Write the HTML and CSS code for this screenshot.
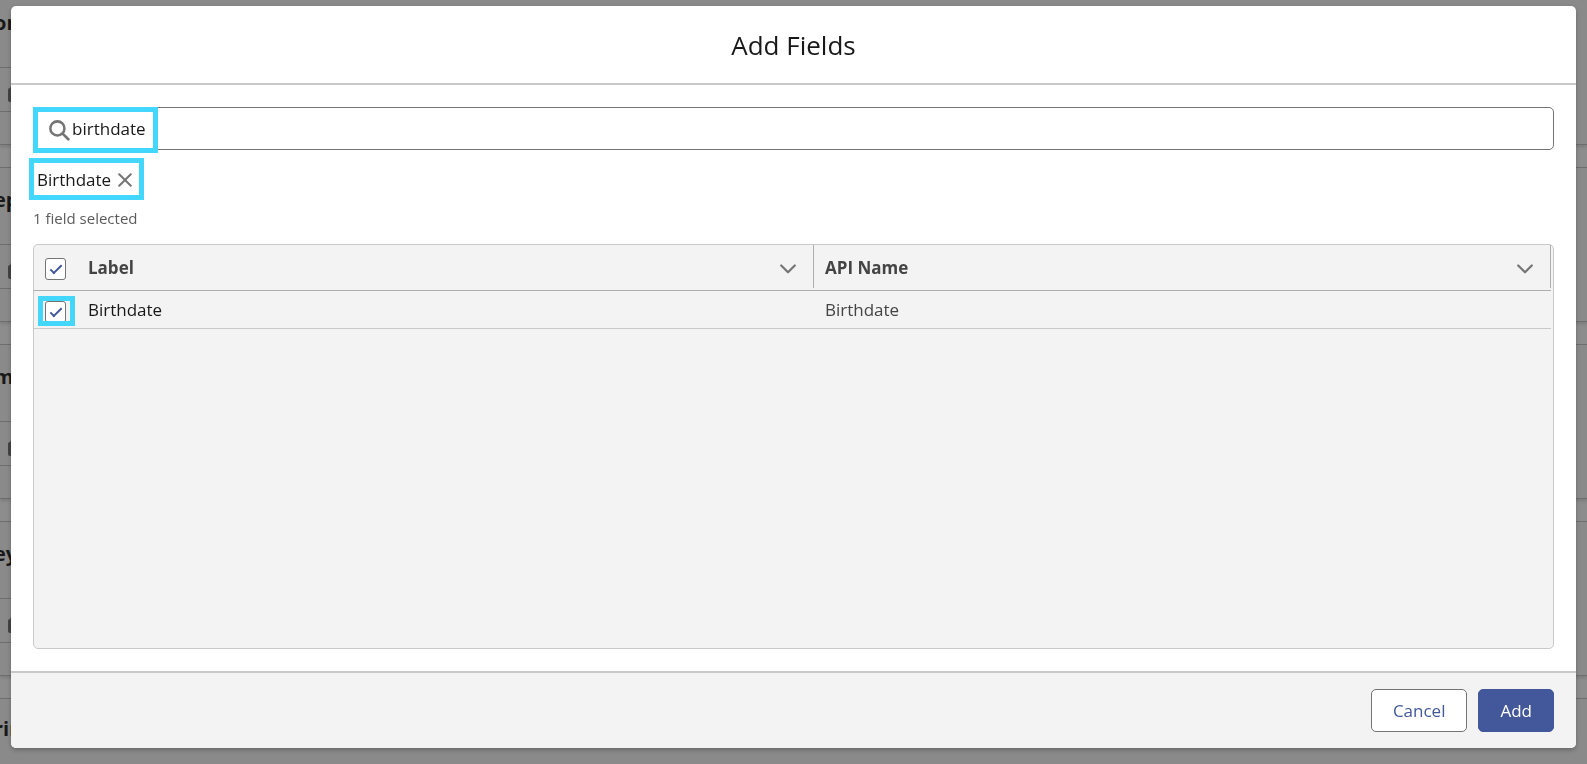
FILE: index.html
```
<!DOCTYPE html>
<html lang="en">
<head>
  <meta charset="UTF-8" />
  <title>Add Fields</title>
  <link rel="stylesheet" href="styles.css">
</head>
<body>
  <!-- page behind the modal -->
  <div class="page" aria-hidden="true">
    <div class="card">
      <div class="card-title">on</div>
      <div class="card-row"><svg class="lock" viewBox="0 0 14 18"><path d="M3 7V5a4 4 0 0 1 8 0v2" fill="none" stroke="#444" stroke-width="2"/><rect y="4" width="14" height="14" rx="2" fill="#444"/></svg></div>
    </div>
    <div class="card">
      <div class="card-title">ep</div>
      <div class="card-row"><svg class="lock" viewBox="0 0 14 18"><path d="M3 7V5a4 4 0 0 1 8 0v2" fill="none" stroke="#444" stroke-width="2"/><rect y="4" width="14" height="14" rx="2" fill="#444"/></svg></div>
    </div>
    <div class="card">
      <div class="card-title">m</div>
      <div class="card-row"><svg class="lock" viewBox="0 0 14 18"><path d="M3 7V5a4 4 0 0 1 8 0v2" fill="none" stroke="#444" stroke-width="2"/><rect y="4" width="14" height="14" rx="2" fill="#444"/></svg></div>
    </div>
    <div class="card">
      <div class="card-title">ey</div>
      <div class="card-row"><svg class="lock" viewBox="0 0 14 18"><path d="M3 7V5a4 4 0 0 1 8 0v2" fill="none" stroke="#444" stroke-width="2"/><rect y="4" width="14" height="14" rx="2" fill="#444"/></svg></div>
    </div>
    <div class="card card-last">
      <div class="card-title">rin</div>
    </div>
  </div>

  <div class="modal" role="dialog" aria-labelledby="modal-title">
    <header class="modal-header">
      <h2 id="modal-title">Add Fields</h2>
    </header>

    <div class="modal-body">
      <div class="search">
        <svg class="search-icon" viewBox="0 0 20 20" fill="none" stroke="#747474" stroke-width="2.6" stroke-linecap="round"><circle cx="8" cy="8" r="6.7" stroke-width="2.4"/><path d="M13.2 13.2L18.4 18.4"/></svg>
        <input type="text" class="search-input" value="birthdate" aria-label="Search fields">
        <span class="highlight highlight-search"></span>
      </div>

      <div class="pill">
        <span>Birthdate</span>
        <button type="button" class="pill-remove" aria-label="Remove Birthdate">
          <svg viewBox="0 0 14 14" fill="none" stroke="#747474" stroke-width="2" stroke-linecap="round"><path d="M1.2 1.2L12.8 12.8M12.8 1.2L1.2 12.8"/></svg>
        </button>
        <span class="highlight highlight-pill"></span>
      </div>

      <p class="count">1 field selected</p>

      <div class="table-wrap">
        <table class="fields">
          <thead>
            <tr>
              <th class="col-check"><input type="checkbox" class="checkbox" aria-label="Select all" checked></th>
              <th class="col-data">
                <div class="th-content">Label
                  <button type="button" class="sort" aria-label="Label actions"><svg viewBox="0 0 16 10" fill="none" stroke="#747474" stroke-width="2.2" stroke-linecap="round" stroke-linejoin="round"><path d="M1.2 1.5L8 8.3L14.8 1.5"/></svg></button>
                </div>
              </th>
              <th class="col-data">
                <div class="th-content">API Name
                  <button type="button" class="sort" aria-label="API Name actions"><svg viewBox="0 0 16 10" fill="none" stroke="#747474" stroke-width="2.2" stroke-linecap="round" stroke-linejoin="round"><path d="M1.2 1.5L8 8.3L14.8 1.5"/></svg></button>
                </div>
              </th>
            </tr>
          </thead>
          <tbody>
            <tr>
              <td class="col-check"><input type="checkbox" class="checkbox" aria-label="Select Birthdate" checked><span class="highlight highlight-check"></span></td>
              <td>Birthdate</td>
              <td class="api">Birthdate</td>
            </tr>
          </tbody>
        </table>
      </div>
    </div>

    <footer class="modal-footer">
      <button type="button" class="btn btn-neutral">Cancel</button>
      <button type="button" class="btn btn-brand">Add</button>
    </footer>
  </div>
</body>
</html>
```
FILE: styles.css
```
* {
  box-sizing: border-box;
}
body {
  margin: 0;
  background: #8d8d8d;
  color: #181818;
  font-family: "Segoe UI", "Open Sans", sans-serif;
  font-size: 17px;
  line-height: 24px;
}
button, input {
  font: inherit;
  color: inherit;
}
svg {
  display: block;
}

/* page behind */
.page {
  display: flex;
  flex-direction: column;
  gap: 22px;
  height: 100vh;
  overflow: hidden;
}
.card {
  flex: none;
  height: 155px;
  padding-right: 24px;
  background: #8a8a8a;
  border-top: 1px solid #6e6e6e;
  border-bottom: 1px solid #6e6e6e;
  box-shadow: 0 2px 3px rgba(0,0,0,0.12);
}
.card:first-child {
  margin-top: -10px;
}
.card-last {
  flex: 1;
  height: auto;
  border-bottom: 0;
}
.card-title {
  height: 76px;
  padding-top: 20px;
  margin-left: -6px;
  font-size: 20px;
  font-weight: bold;
}
.card-last .card-title {
  height: auto;
  padding-top: 18px;
}
.card-row {
  height: 45px;
  padding: 16px 8px;
  border-top: 1px solid #6e6e6e;
  border-bottom: 1px solid #6e6e6e;
}
.lock {
  width: 14px;
  height: 18px;
}

/* modal */
.modal {
  position: fixed;
  inset: 6px 11px 16px;
  display: flex;
  flex-direction: column;
  background: #fff;
  border-radius: 5px;
  box-shadow: 0 2px 4px rgba(0,0,0,0.25);
}
.modal-header {
  padding: 23px 22px 21px;
  border-bottom: 2px solid #c9c9c9;
  text-align: center;
}
.modal-header h2 {
  margin: 0;
  font-size: 26px;
  font-weight: normal;
  line-height: 33px;
}
.modal-body {
  flex: 1;
  display: flex;
  flex-direction: column;
  padding: 22px;
}
.highlight {
  position: absolute;
  border: 5px solid #43d7fd;
  pointer-events: none;
}

.search {
  position: relative;
  display: flex;
  align-items: center;
  height: 43px;
  padding-left: 15px;
  border: 1px solid #747474;
  border-radius: 5px;
}
.search-icon {
  width: 21px;
  height: 21px;
  margin-top: 3px;
}
.search-input {
  flex: 1;
  padding: 0 2px;
  border: 0;
  outline: 0;
  background: none;
}
.highlight-search {
  top: -1px;
  left: -1px;
  width: 125px;
  height: 46px;
}

.pill {
  position: relative;
  display: flex;
  align-items: center;
  gap: 7px;
  align-self: flex-start;
  height: 32px;
  margin-top: 14px;
  padding: 0 8px 0 4px;
}
.pill-remove {
  padding: 0;
  border: 0;
  background: none;
}
.pill-remove svg {
  width: 14px;
  height: 14px;
}
.highlight-pill {
  inset: -6px -4px -4px;
}

.count {
  margin: 11px 0 15px;
  color: #5c5c5c;
  font-size: 15px;
  line-height: 22px;
}

.table-wrap {
  flex: 1;
  padding-right: 2px;
  background: #f3f3f3;
  border: 1px solid #c9c9c9;
  border-radius: 5px;
}
.fields {
  width: 100%;
  table-layout: fixed;
  border-collapse: separate;
  border-spacing: 0;
}
.fields th,
.fields td {
  position: relative;
  padding: 0 11px;
  text-align: left;
}
.fields th {
  height: 46px;
  border-bottom: 1px solid #aeaeae;
  color: #444;
}
.fields td {
  height: 38px;
  border-bottom: 1px solid #c9c9c9;
}
.fields .col-check {
  width: 43px;
  padding-right: 0;
}
.col-data::after {
  content: "";
  position: absolute;
  top: 0;
  right: 0;
  width: 1px;
  height: 43px;
  background: #aeaeae;
}
.th-content {
  display: flex;
  align-items: center;
  justify-content: space-between;
}
.sort {
  padding: 2px 7px 0;
  border: 0;
  background: none;
}
.sort svg {
  width: 16px;
  height: 10px;
}
.fields .api {
  color: #444;
}
.checkbox {
  appearance: none;
  display: block;
  position: relative;
  width: 21px;
  height: 22px;
  margin: 2px 0 0;
  background: #fff;
  border: 1px solid #747474;
  border-radius: 3px;
}
td .checkbox {
  margin-top: 4px;
}
.checkbox:checked::after {
  content: "";
  box-sizing: border-box;
  position: absolute;
  top: 6px;
  left: 4px;
  width: 12px;
  height: 6px;
  border: solid #43589b;
  border-width: 0 0 2px 2px;
  transform: rotate(-45deg);
}
.highlight-check {
  top: 5px;
  left: 4px;
  width: 37px;
  height: 30px;
}

.modal-footer {
  display: flex;
  justify-content: flex-end;
  gap: 11px;
  padding: 16px 22px;
  background: #f3f3f3;
  border-top: 2px solid #c9c9c9;
  border-radius: 0 0 5px 5px;
}
.btn {
  height: 43px;
  padding: 0 21px;
  border: 1px solid #747474;
  border-radius: 5px;
  background: #fff;
  color: #43589b;
}
.btn-brand {
  border-color: #43589b;
  background: #43589b;
  color: #fff;
}
```
